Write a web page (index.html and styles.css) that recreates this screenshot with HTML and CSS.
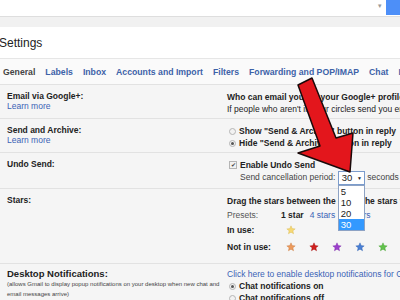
FILE: index.html
```html
<!DOCTYPE html>
<html lang="en">
<head>
  <meta charset="UTF-8" />
  <title>Settings</title>
  <link rel="stylesheet" href="styles.css">
</head>
<body>
  <div class="topbar">
    <span class="search-caret">&#9662;</span>
    <span class="search-btn"></span>
  </div>
  <div class="band"></div>

  <div class="header">
    <h1>Settings</h1>
  </div>

  <nav class="tabs">
    <span class="tab active">General</span>
    <a class="tab">Labels</a>
    <a class="tab">Inbox</a>
    <a class="tab">Accounts and Import</a>
    <a class="tab">Filters</a>
    <a class="tab">Forwarding and POP/IMAP</a>
    <a class="tab">Chat</a>
    <a class="tab">Labs</a>
  </nav>

  <section class="row">
    <div class="label">
      <div class="title">Email via Google+:</div>
      <a class="link">Learn more</a>
    </div>
    <div class="value">
      <div class="strong">Who can email you via your Google+ profile?</div>
      <div>If people who aren't in your circles send you email, it will go to your Social tab.</div>
    </div>
  </section>

  <section class="row">
    <div class="label">
      <div class="title">Send and Archive:</div>
      <a class="link">Learn more</a>
    </div>
    <div class="value">
      <div class="opt"><span class="radio"></span><span class="strong">Show "Send &amp; Archive" button in reply</span></div>
      <div class="opt"><span class="radio checked"></span><span class="strong">Hide "Send &amp; Archive" button in reply</span></div>
    </div>
  </section>

  <section class="row">
    <div class="label">
      <div class="title">Undo Send:</div>
    </div>
    <div class="value">
      <div class="opt"><span class="checkbox">&#10004;</span><span class="strong">Enable Undo Send</span></div>
      <div class="indent">
        Send cancellation period:
        <span class="select-wrap">
          <span class="select">30 <span class="caret">&#9660;</span></span>
          <span class="select-list">
            <span class="option">5</span>
            <span class="option">10</span>
            <span class="option">20</span>
            <span class="option selected">30</span>
          </span>
        </span>
        seconds
      </div>
    </div>
  </section>

  <section class="row stars">
    <div class="label">
      <div class="title">Stars:</div>
    </div>
    <div class="value">
      <div class="strong">Drag the stars between the lists. The stars will rotate in the order shown below.</div>
      <div class="presets">
        <span class="muted">Presets:</span>
        <span class="strong">1 star</span>
        <a class="link">4 stars</a>
        <a class="link">all stars</a>
      </div>
      <div class="star-row">
        <span class="strong star-label">In use:</span>
        <svg class="star" viewBox="0 0 24 24"><polygon points="12,2 14.9,8.6 22,9.3 16.6,14 18.2,21 12,17.3 5.8,21 7.4,14 2,9.3 9.1,8.6" fill="#f6d874" stroke="#d8b850"/></svg>
      </div>
      <div class="star-row">
        <span class="strong star-label">Not in use:</span>
        <svg class="star" viewBox="0 0 24 24"><polygon points="12,2 14.9,8.6 22,9.3 16.6,14 18.2,21 12,17.3 5.8,21 7.4,14 2,9.3 9.1,8.6" fill="#ec9a5c" stroke="#c77a40"/></svg>
        <svg class="star" viewBox="0 0 24 24"><polygon points="12,2 14.9,8.6 22,9.3 16.6,14 18.2,21 12,17.3 5.8,21 7.4,14 2,9.3 9.1,8.6" fill="#d0201e" stroke="#a01010"/></svg>
        <svg class="star" viewBox="0 0 24 24"><polygon points="12,2 14.9,8.6 22,9.3 16.6,14 18.2,21 12,17.3 5.8,21 7.4,14 2,9.3 9.1,8.6" fill="#9c3fcc" stroke="#7a2aa8"/></svg>
        <svg class="star" viewBox="0 0 24 24"><polygon points="12,2 14.9,8.6 22,9.3 16.6,14 18.2,21 12,17.3 5.8,21 7.4,14 2,9.3 9.1,8.6" fill="#4a7fd4" stroke="#3060b0"/></svg>
        <svg class="star" viewBox="0 0 24 24"><polygon points="12,2 14.9,8.6 22,9.3 16.6,14 18.2,21 12,17.3 5.8,21 7.4,14 2,9.3 9.1,8.6" fill="#62c24c" stroke="#43a030"/></svg>
      </div>
    </div>
  </section>

  <section class="row notify">
    <div class="label">
      <div class="title big">Desktop Notifications:</div>
      <div class="small">(allows Gmail to display popup notifications on your desktop when new chat and</div>
      <div class="small">email messages arrive)</div>
    </div>
    <div class="value">
      <a class="link">Click here to enable desktop notifications for Gmail.</a>
      <div class="opt"><span class="radio checked"></span><span class="strong">Chat notifications on</span></div>
      <div class="opt"><span class="radio"></span><span class="strong">Chat notifications off</span></div>
    </div>
  </section>

  <!-- red pointer drawn over the page -->
  <svg class="pointer" width="400" height="300" viewBox="0 0 400 300">
    <polygon points="298,85 312,78 336,138 353,133 350,172 298,153 320,146" fill="#e3161c" stroke="#1a0a0a" stroke-width="1.5" stroke-linejoin="round"/>
  </svg>
</body>
</html>
```

FILE: styles.css
```css
html, body {
  margin: 0;
  padding: 0;
}

body {
  width: 400px;
  height: 300px;
  overflow: hidden;
  position: relative;
  background-color: #f5f5f5;
  color: #222;
  font-family: "Liberation Sans", Arial, sans-serif;
  font-size: 8.5px;
}

a {
  text-decoration: none;
}

.link {
  color: #3b63b6;
}

.strong {
  font-weight: bold;
}

.muted {
  color: #555;
}

.topbar {
  height: 16px;
  background-color: #fff;
  display: flex;
  justify-content: flex-end;
  align-items: flex-start;
}

.search-caret {
  color: #999;
  font-size: 7px;
  line-height: 12px;
  margin-right: 4px;
}

.search-btn {
  width: 14px;
  height: 15px;
  background-color: #4d8ff8;
}

.band {
  height: 10px;
  border-top: 1px solid #dedede;
  background-color: #f1f1f1;
}

.header {
  height: 31px;
  background-color: #fff;
  display: flex;
  align-items: center;
}

.header h1 {
  margin: 0 0 0 -1px;
  font-size: 12px;
  font-weight: normal;
  color: #222;
}

.tabs {
  height: 25px;
  background-color: #fafafa;
  border-top: 1px solid #e6e6e6;
  border-bottom: 1px solid #e2e2e2;
  display: flex;
  align-items: center;
  gap: 10px;
  padding-left: 3px;
  white-space: nowrap;
  font-size: 8.7px;
  font-weight: bold;
}

.tab {
  color: #3d62a8;
}

.tab.active {
  color: #444;
}

.row {
  display: grid;
  grid-template-columns: 220px 1fr;
  padding: 6px 0 3px 7px;
  border-bottom: 1px solid #e2e2e2;
  white-space: nowrap;
}

.label {
  line-height: 10px;
}

.label .title {
  font-weight: bold;
}

.value {
  line-height: 12px;
  min-width: 0;
}

.opt {
  display: flex;
  align-items: center;
  gap: 3px;
}

.radio {
  width: 7px;
  height: 7px;
  margin-left: 2px;
  border: 1px solid #b5b5b5;
  border-radius: 50%;
  background-color: #f2f2f2;
  box-sizing: border-box;
  display: flex;
  align-items: center;
  justify-content: center;
}

.radio.checked::after {
  content: "";
  width: 3px;
  height: 3px;
  border-radius: 50%;
  background-color: #555;
}

.checkbox {
  width: 8px;
  height: 8px;
  margin-left: 2px;
  box-sizing: border-box;
  border: 1px solid #b5b5b5;
  background-color: #f2f2f2;
  color: #444;
  font-size: 6px;
  line-height: 6px;
  text-align: center;
}

.indent {
  padding-left: 13px;
  color: #444;
}

.select-wrap {
  position: relative;
  display: inline-block;
  vertical-align: middle;
}

.select {
  display: flex;
  justify-content: space-between;
  align-items: center;
  width: 27px;
  height: 14px;
  box-sizing: border-box;
  padding: 0 2px 0 3px;
  border: 1px solid #7b9ccc;
  background-color: #fff;
  color: #222;
  font-size: 9.5px;
}

.select .caret {
  font-size: 5px;
}

.select-list {
  position: absolute;
  top: 14px;
  left: 0;
  width: 27px;
  box-sizing: border-box;
  border: 1px solid #8da2c4;
  background-color: #fff;
  display: flex;
  flex-direction: column;
  z-index: 2;
}

.option {
  height: 11px;
  line-height: 11px;
  padding-left: 2px;
  font-size: 9.5px;
  color: #222;
}

.option.selected {
  background-color: #3399ff;
  color: #fff;
}

.row.stars {
  padding-bottom: 8px;
}

.presets {
  display: flex;
  gap: 6px;
  margin-top: 2px;
}

.presets .muted {
  width: 48px;
}

.star-row {
  display: flex;
  align-items: center;
  gap: 13px;
  height: 16px;
  margin-top: 1px;
}

.star-row + .star-row {
  margin-top: 1px;
}

.star-label {
  width: 46px;
}

.star {
  width: 10px;
  height: 10px;
}

.row.notify {
  padding-top: 4px;
  border-bottom: none;
}

.label .big {
  font-size: 9.5px;
  line-height: 11px;
}

.label .small {
  font-size: 6px;
  color: #444;
}

.pointer {
  position: absolute;
  top: 0;
  left: 0;
  pointer-events: none;
}
```
